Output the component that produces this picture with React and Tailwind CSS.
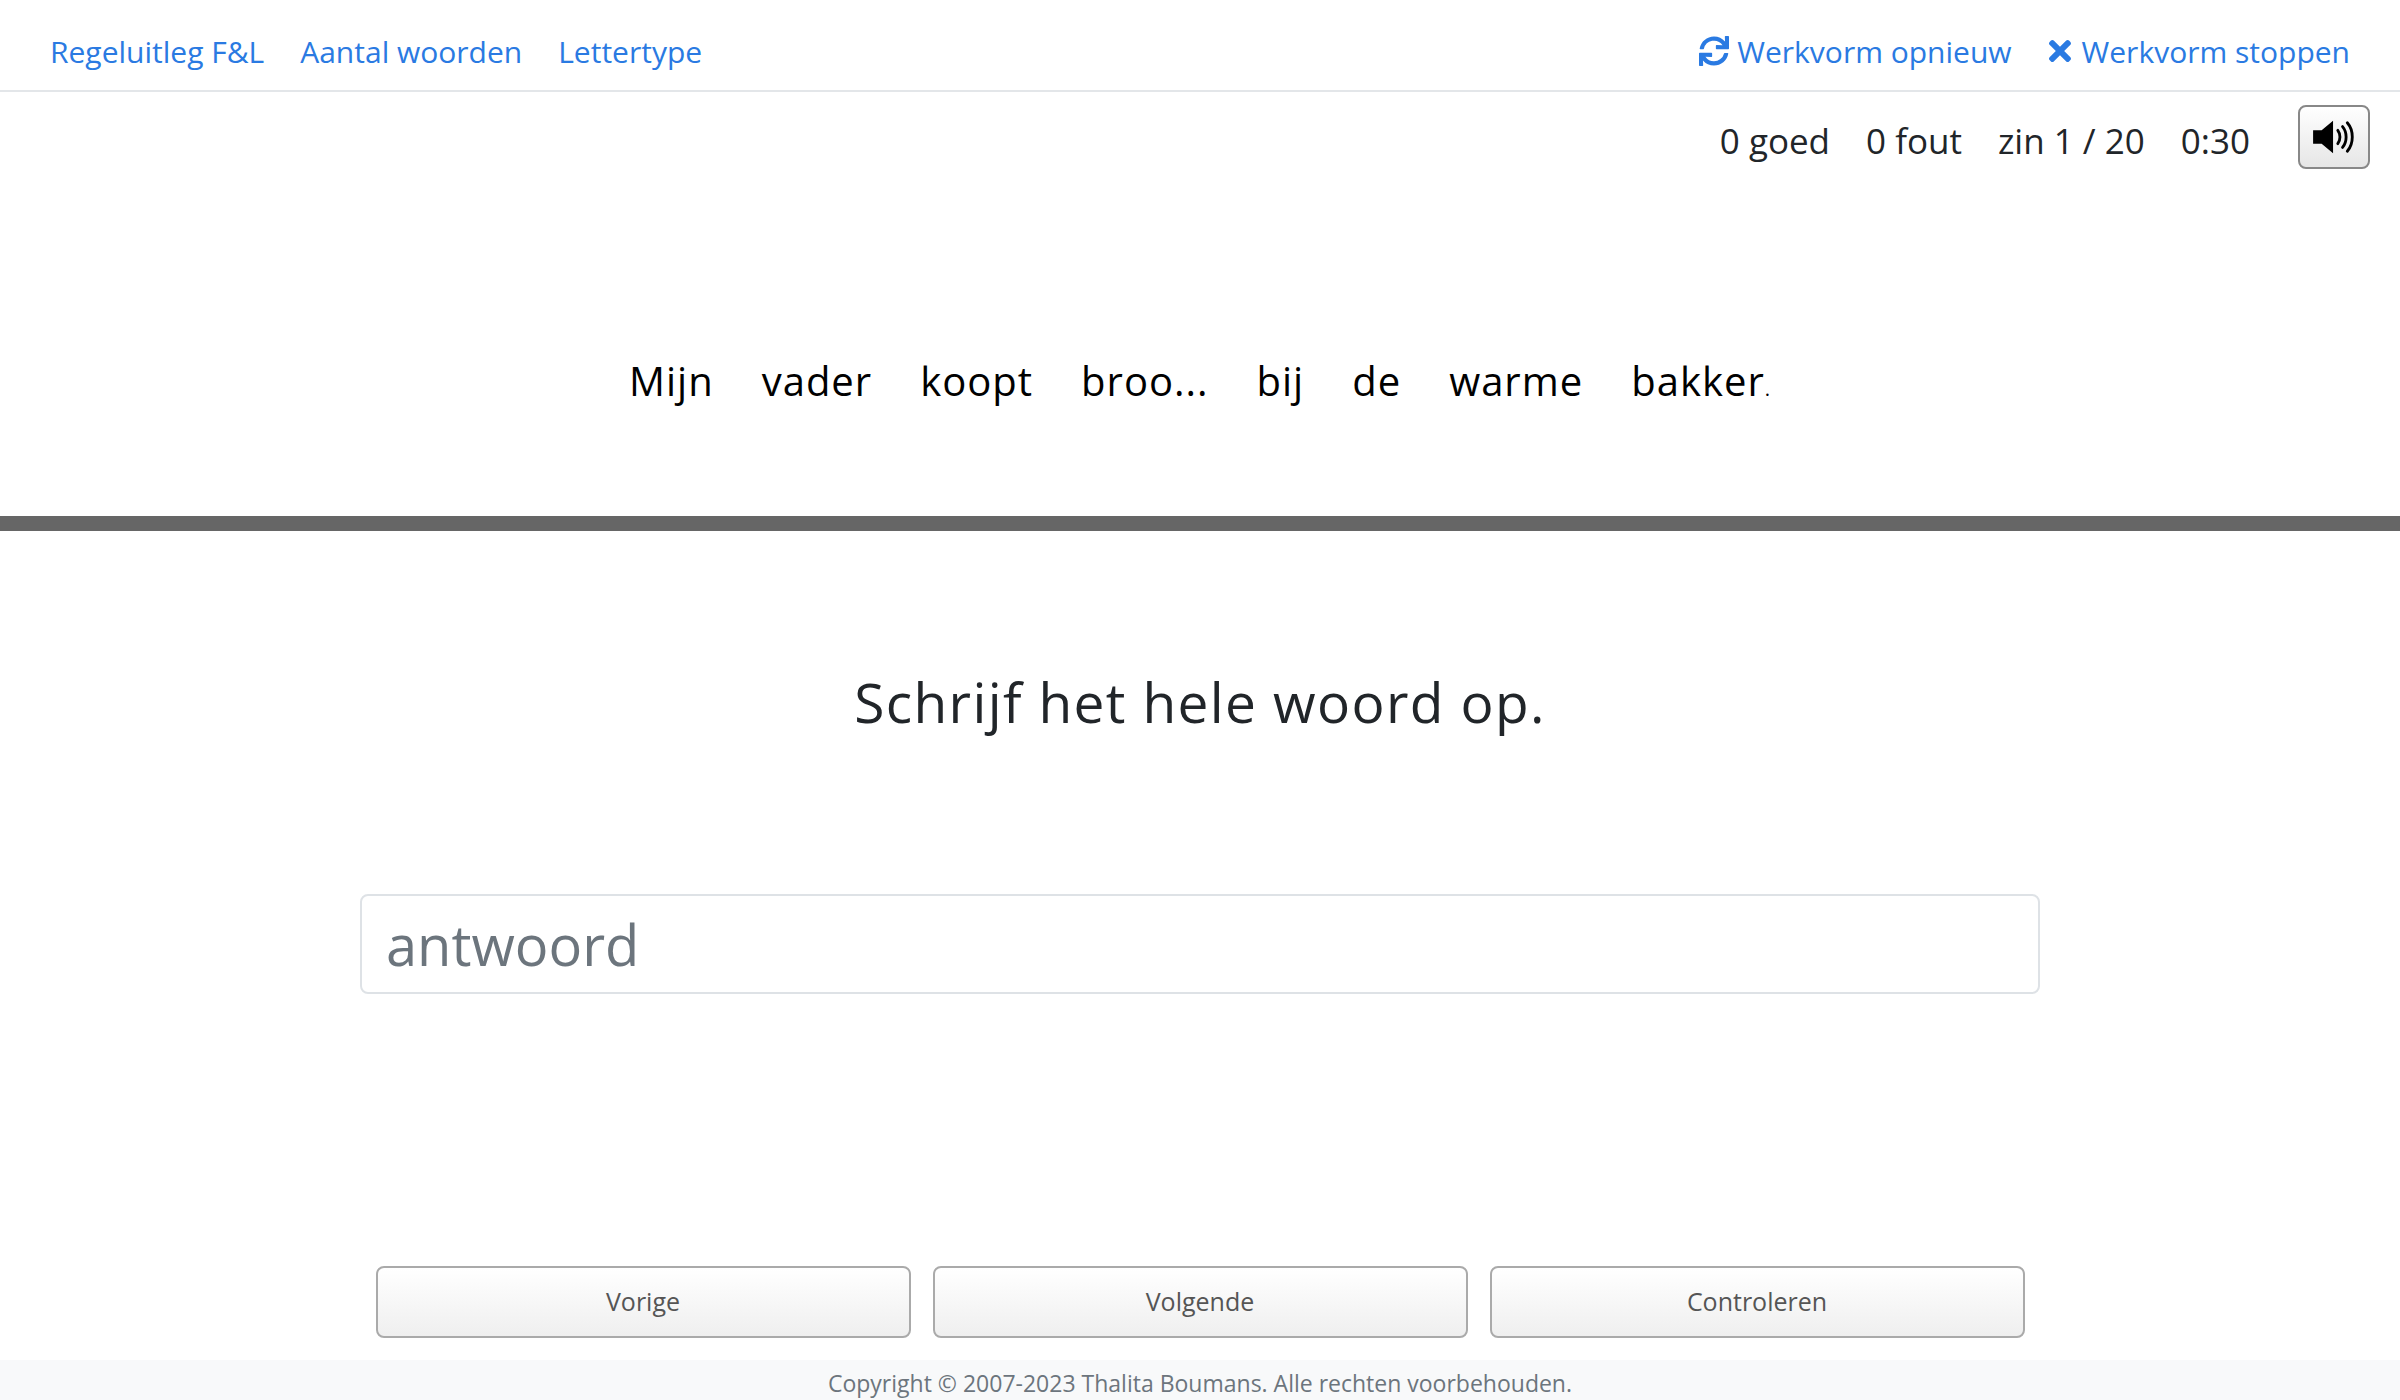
import React from 'react';

const words = ['Mijn', 'vader', 'koopt', 'broo...', 'bij', 'de', 'warme', 'bakker'];

const RefreshIcon = () => (
  <svg viewBox="0 0 512 512" className="w-[30px] h-[30px] fill-current">
    <path d="M440.65 12.57l4 82.77A247.16 247.16 0 0 0 255.83 8C134.73 8 33.91 94.92 12.290 209.82A12 12 0 0 0 24.09 224h49.05a12 12 0 0 0 11.67-9.26 175.91 175.91 0 0 1 317-56.94l-101.46-4.86a12 12 0 0 0-12.57 12v47.41a12 12 0 0 0 12 12H500a12 12 0 0 0 12-12V12a12 12 0 0 0-12-12h-47.37a12 12 0 0 0-11.98 12.57zM255.83 432a175.61 175.61 0 0 1-146-77.8l101.8 4.87a12 12 0 0 0 12.57-12v-47.4a12 12 0 0 0-12-12H12a12 12 0 0 0-12 12V500a12 12 0 0 0 12 12h47.35a12 12 0 0 0 12-12.6l-4.150-82.57A247.17 247.17 0 0 0 255.83 504c121.11 0 221.93-86.92 243.55-201.82a12 12 0 0 0-11.8-14.18h-49.05a12 12 0 0 0-11.67 9.26A175.86 175.86 0 0 1 255.83 432z" />
  </svg>
);

const CloseIcon = () => (
  <svg viewBox="0 0 352 512" className="w-[24px] h-[32px] fill-current">
    <path d="M242.72 256l100.07-100.07c12.28-12.28 12.28-32.19 0-44.48l-22.24-22.24c-12.28-12.28-32.19-12.28-44.48 0L176 189.28 75.93 89.21c-12.28-12.28-32.19-12.28-44.48 0L9.21 111.45c-12.28 12.28-12.28 32.19 0 44.48L109.28 256 9.21 356.07c-12.28 12.28-12.28 32.19 0 44.48l22.24 22.24c12.28 12.28 32.2 12.28 44.48 0L176 322.72l100.07 100.07c12.28 12.28 32.2 12.28 44.48 0l22.24-22.24c12.28-12.28 12.28-32.19 0-44.48L242.72 256z" />
  </svg>
);

const SpeakerIcon = () => (
  <svg viewBox="0 0 48 40" className="w-[46px] h-[38px]">
    <path d="M2 13h9l12-10v34L11 27H2z" fill="#000" />
    <path d="M28 13c3 4 3 10 0 14" stroke="#000" strokeWidth="3" fill="none" strokeLinecap="round" />
    <path d="M33 9c5 6 5 16 0 22" stroke="#000" strokeWidth="3" fill="none" strokeLinecap="round" />
    <path d="M38 5c7 8 7 22 0 30" stroke="#000" strokeWidth="3" fill="none" strokeLinecap="round" />
  </svg>
);

export default function App() {
  return (
    <div className="h-[1400px] flex flex-col bg-white text-[#212529]" style={{ fontFamily: '"Open Sans", "Noto Sans", sans-serif' }}>
      {/* nav */}
      <div className="h-[92px] flex items-center justify-between px-[50px] pt-[12px] border-b-2 border-[#e3e6e9] text-[30px] text-[#2a7ae2]">
        <div className="flex gap-[36px]">
          <span>Regeluitleg F&amp;L</span>
          <span>Aantal woorden</span>
          <span>Lettertype</span>
        </div>
        <div className="flex gap-[36px]">
          <span className="flex items-center gap-[8px]"><RefreshIcon />Werkvorm opnieuw</span>
          <span className="flex items-center gap-[10px]"><CloseIcon />Werkvorm stoppen</span>
        </div>
      </div>

      {/* stats */}
      <div className="flex justify-end items-center gap-[36px] pr-[30px] pt-[13px] text-[35px]">
        <span className="pt-[8px]">0 goed</span>
        <span className="pt-[8px]">0 fout</span>
        <span className="pt-[8px]">zin 1 / 20</span>
        <span className="pt-[8px] mr-[12px]">0:30</span>
        <button className="w-[72px] h-[64px] rounded-[8px] border-2 border-[#888] bg-gradient-to-b from-white to-[#e6e6e6] flex items-center justify-center">
          <SpeakerIcon />
        </button>
      </div>

      {/* sentence */}
      <div className="h-[347px] pt-[76px] flex items-center justify-center gap-[48px] text-[40px] text-black tracking-wide">
        {words.map((w, i) => (
          <span key={i}>{w}{i === words.length - 1 && <span className="text-[20px]">.</span>}</span>
        ))}
      </div>

      <div className="h-[15px] bg-[#666]" />

      <div className="flex-1 flex flex-col items-center">
        <div className="mt-[130px] text-[55px] tracking-wide">Schrijf het hele woord op.</div>
        <div className="mt-[150px] w-[1680px] h-[100px] border-2 border-[#dee2e6] rounded-[8px] flex items-center px-[24px] text-[56px] text-[#6c757d]">
          antwoord
        </div>
        <div className="mt-auto mb-[22px] flex gap-[22px]">
          {['Vorige', 'Volgende', 'Controleren'].map((b) => (
            <button key={b} className="w-[535px] h-[72px] rounded-[8px] border-2 border-[#aaa] bg-gradient-to-b from-white to-[#efefef] text-[25px] text-[#555]">
              {b}
            </button>
          ))}
        </div>
      </div>

      <div className="h-[40px] bg-[#f8f9fa] flex items-end justify-center text-[23px] text-[#6c757d] leading-[34px]">
        Copyright © 2007-2023 Thalita Boumans. Alle rechten voorbehouden.
      </div>
    </div>
  );
}
